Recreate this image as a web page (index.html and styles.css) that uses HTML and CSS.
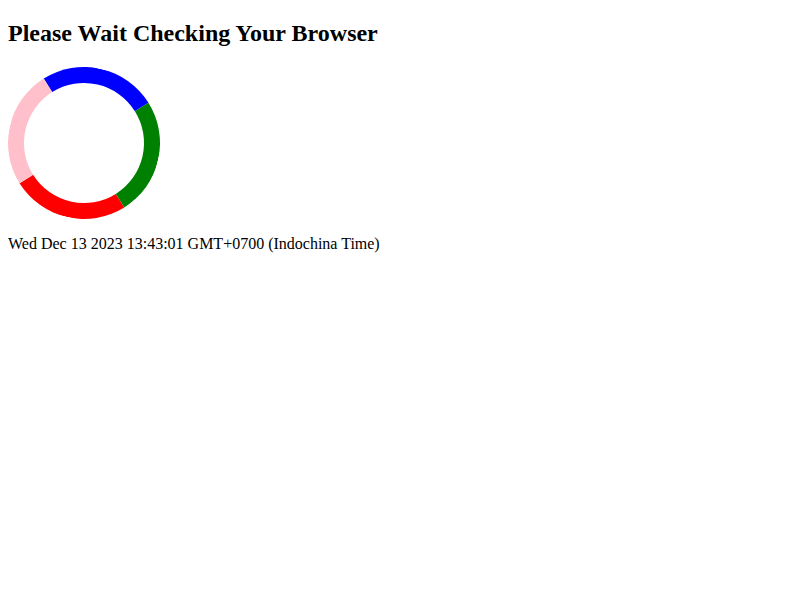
FILE: index.html
```html
<!DOCTYPE html>
<html>
<head>
<meta charset="utf-8">
<title>Please Wait</title>
<link rel="stylesheet" href="styles.css">
</head>
<body>
<h2 class="title">Please Wait Checking Your Browser</h2>
<div class="loader"></div>
<p class="date">Wed Dec 13 2023 13:43:01 GMT+0700 (Indochina Time)</p>
</body>
</html>
```
FILE: styles.css
```css
body {
  margin: 8px;
  font-family: "Liberation Serif", "Times New Roman", serif;
  color: #000;
  background: #fff;
}
.title {
  font-size: 24px;
  font-weight: bold;
  margin: 12px 0 19.92px;
}
.loader {
  width: 120px;
  height: 120px;
  border: 16px solid;
  border-top-color: #0000ff;
  border-right-color: #008000;
  border-bottom-color: #ff0000;
  border-left-color: #ffc0cb;
  border-radius: 50%;
  transform: rotate(13deg);
}
.date {
  font-size: 16px;
  margin: 16px 0;
}
```
